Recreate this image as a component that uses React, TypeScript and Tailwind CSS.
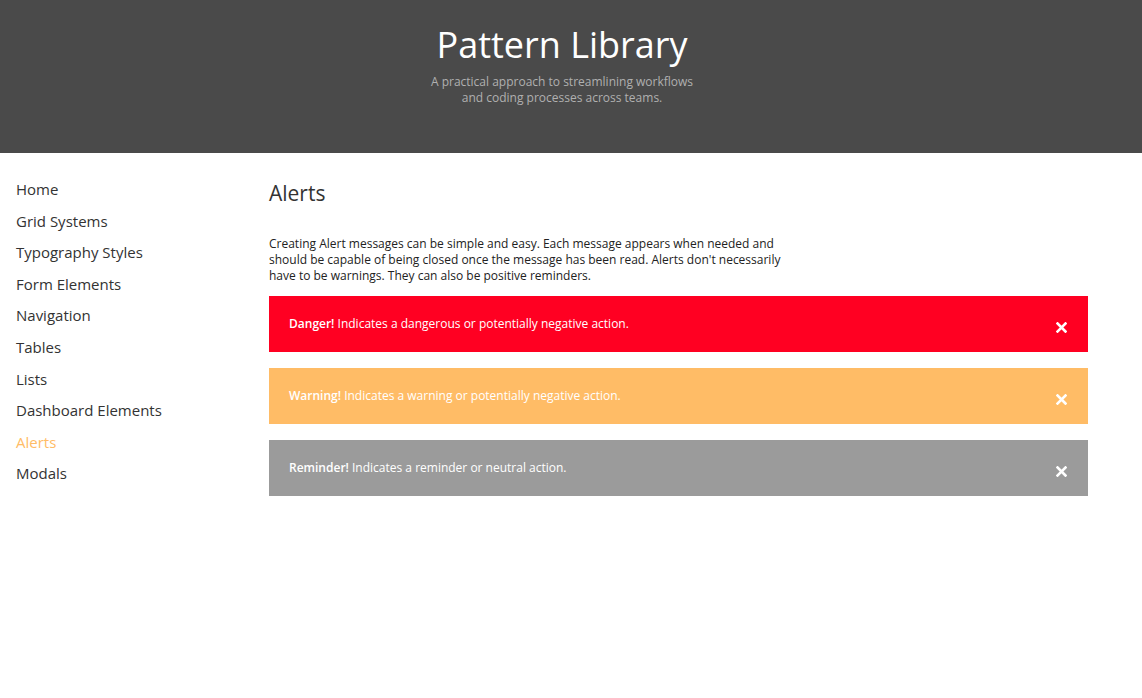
const links = [
  'Home',
  'Grid Systems',
  'Typography Styles',
  'Form Elements',
  'Navigation',
  'Tables',
  'Lists',
  'Dashboard Elements',
  'Alerts',
  'Modals',
];

const alerts = [
  { label: 'Danger!', text: 'Indicates a dangerous or potentially negative action.', bg: 'bg-[#ff0022]' },
  { label: 'Warning!', text: 'Indicates a warning or potentially negative action.', bg: 'bg-[#ffbc66]' },
  { label: 'Reminder!', text: 'Indicates a reminder or neutral action.', bg: 'bg-[#9b9b9b]' },
];

function CloseIcon() {
  return (
    <svg width="11" height="11" viewBox="0 0 11 11" className="mt-[6px] mr-[1px]">
      <path d="M1.5 1.5 L9.5 9.5 M9.5 1.5 L1.5 9.5" stroke="white" strokeWidth="2.6" strokeLinecap="square" />
    </svg>
  );
}

export default function App() {
  return (
    <div className="min-h-[698px] bg-white font-['Open_Sans',sans-serif] text-[#333]">
      <header className="h-[153px] bg-[#4a4a4a] flex flex-col items-center pt-[22px] pr-[18px]">
        <h1 className="text-[36px] leading-[46px] text-white">Pattern Library</h1>
        <p className="mt-[6px] text-[12px] leading-[16px] text-[#b0b0b0] text-center">
          A practical approach to streamlining workflows
          <br />
          and coding processes across teams.
        </p>
      </header>

      <div className="flex">
        <nav className="w-[269px] shrink-0 pl-[16px] pt-[20px]">
          <ul>
            {links.map((l) => (
              <li
                key={l}
                className={`h-[31.6px] leading-[32px] text-[15px] ${l === 'Alerts' ? 'text-[#ffbc66]' : 'text-[#333]'}`}
              >
                {l}
              </li>
            ))}
          </ul>
        </nav>

        <main className="flex-1 pr-[54px] pt-[26px]">
          <h2 className="text-[21px] leading-[28px] text-[#333]">Alerts</h2>
          <p className="mt-[29px] max-w-[525px] text-[12px] leading-[16px] text-[#222]">
            Creating Alert messages can be simple and easy. Each message appears when needed and should be capable of being closed once the message has been read. Alerts don't necessarily have to be warnings. They can also be positive reminders.
          </p>
          <div className="mt-[12px] flex flex-col gap-[16px]">
            {alerts.map((a) => (
              <div key={a.label} className={`${a.bg} h-[56px] flex items-center justify-between pl-[20px] pr-[20px]`}>
                <span className="text-[12px] text-white">
                  <span className="font-semibold">{a.label}</span> {a.text}
                </span>
                <CloseIcon />
              </div>
            ))}
          </div>
        </main>
      </div>
    </div>
  );
}
